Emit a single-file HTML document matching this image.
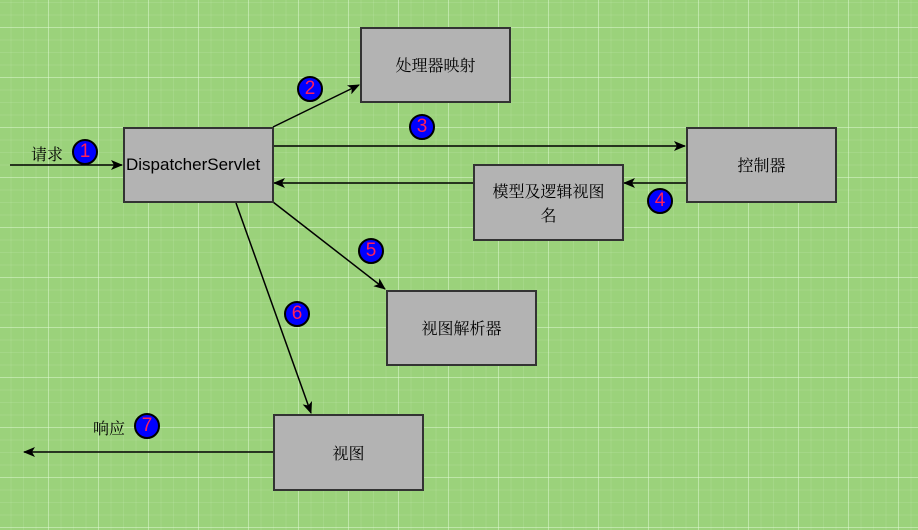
<!DOCTYPE html>
<html><head><meta charset="utf-8"><style>
html,body{margin:0;padding:0}
body{width:918px;height:530px;overflow:hidden;position:relative;background-color:#9bd27b;
background-image:
linear-gradient(to right,rgba(230,255,220,.38) 1px,transparent 1px),
linear-gradient(to bottom,rgba(230,255,220,.38) 1px,transparent 1px),
linear-gradient(to right,rgba(230,255,220,.12) 1px,transparent 1px),
linear-gradient(to bottom,rgba(230,255,220,.12) 1px,transparent 1px);
background-size:50px 50px,50px 50px,12.5px 12.5px,12.5px 12.5px;
background-position:48px 27px,48px 27px,48px 27px,48px 27px;
font-family:"Liberation Sans","Noto Serif CJK SC",serif}
.b{position:absolute;background:#b3b3b3;border:2px solid #333;box-sizing:border-box;display:flex;align-items:center;justify-content:center;text-align:center;font-size:16px;color:#000;font-family:"Noto Serif CJK SC","WenQuanYi Zen Hei",serif;line-height:24px}
.c{position:absolute;width:26px;height:26px;border-radius:50%;background:#00f;border:2px solid #000;box-sizing:border-box;color:#ff1f5a;font:19px/22px "Liberation Sans",sans-serif;text-align:center}
.t{position:absolute;font-size:16px;font-family:"Noto Serif CJK SC",serif}
svg{position:absolute;left:0;top:0}
</style></head><body>
<svg width="918" height="530">
<defs><marker id="a" markerWidth="12" markerHeight="10" refX="11" refY="5" orient="auto" markerUnits="userSpaceOnUse"><path d="M0,0 L12,5 L0,10 L3,5 Z" fill="#000"/></marker></defs>
<g stroke="#000" stroke-width="1.5" fill="none" marker-end="url(#a)">
<line x1="10" y1="165" x2="122" y2="165"/>
<line x1="273" y1="127" x2="359" y2="85"/>
<line x1="273" y1="146" x2="685" y2="146"/>
<line x1="686" y1="183" x2="624" y2="183"/>
<line x1="473" y1="183" x2="274" y2="183"/>
<line x1="273" y1="202" x2="385" y2="289"/>
<line x1="236" y1="203" x2="311" y2="413"/>
<line x1="273" y1="452" x2="24" y2="452"/>
</g></svg>
<div class="b" style="left:123px;top:127px;width:151px;height:76px;font-family:'Liberation Sans',sans-serif;font-size:17px;justify-content:flex-start;padding-left:1px">DispatcherServlet</div>
<div class="b" style="left:360px;top:27px;width:151px;height:76px">处理器映射</div>
<div class="b" style="left:686px;top:127px;width:151px;height:76px">控制器</div>
<div class="b" style="left:473px;top:164px;width:151px;height:77px;padding:0 14px">模型及逻辑视图名</div>
<div class="b" style="left:386px;top:290px;width:151px;height:76px">视图解析器</div>
<div class="b" style="left:273px;top:414px;width:151px;height:77px">视图</div>
<div class="t" style="left:31px;top:142px">请求</div>
<div class="t" style="left:93px;top:416px">响应</div>
<div class="c" style="left:72px;top:139px">1</div>
<div class="c" style="left:297px;top:76px">2</div>
<div class="c" style="left:409px;top:114px">3</div>
<div class="c" style="left:647px;top:188px">4</div>
<div class="c" style="left:358px;top:238px">5</div>
<div class="c" style="left:284px;top:301px">6</div>
<div class="c" style="left:134px;top:413px">7</div>
</body></html>
